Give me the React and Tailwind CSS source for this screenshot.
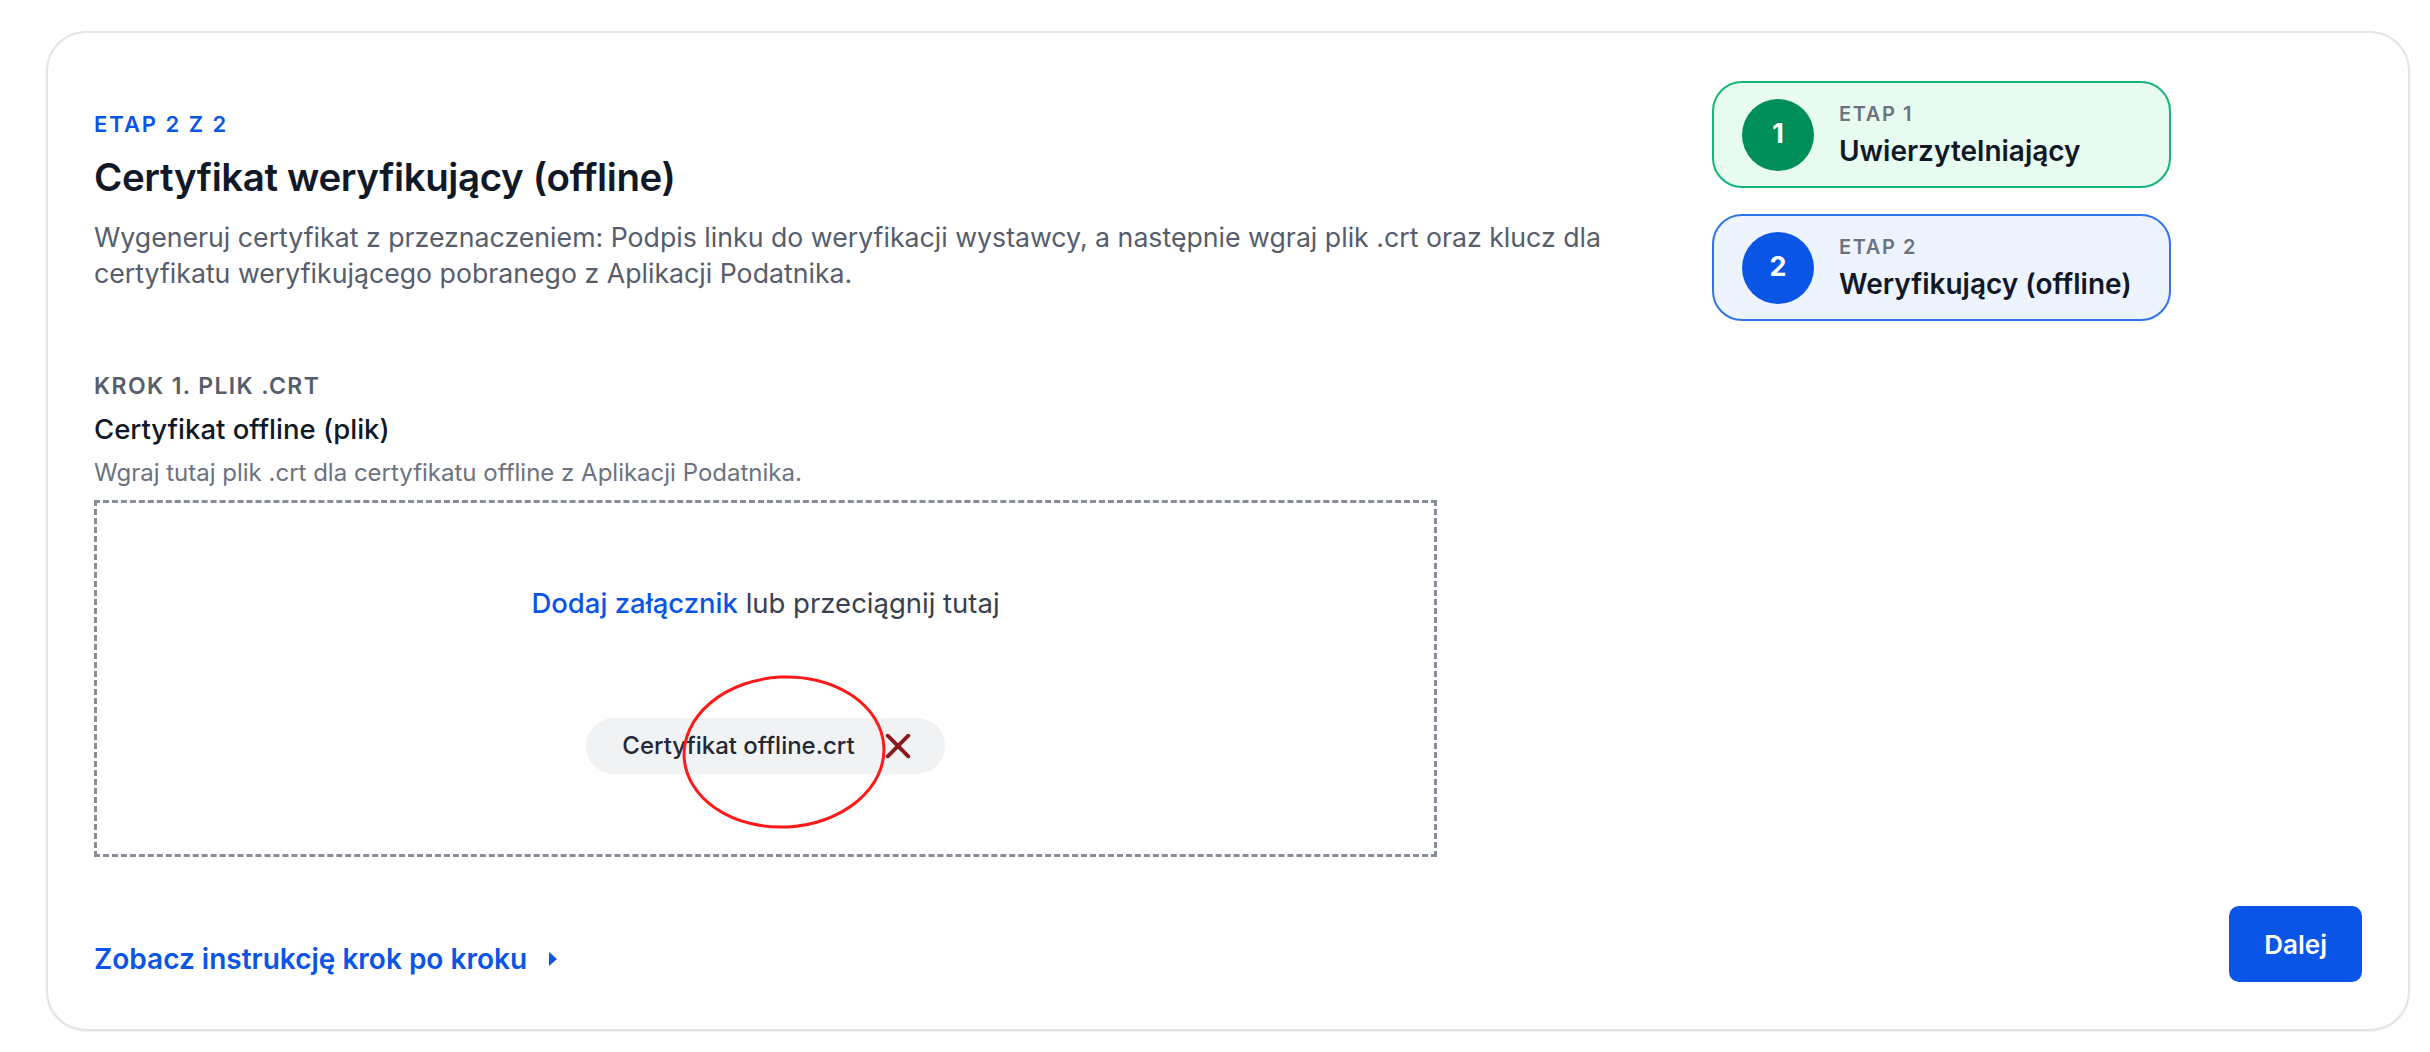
import React from 'react';

const StepCard = ({ number, label, title, active }) => (
  <div
    className={`flex items-center h-[107px] rounded-[30px] border-2 pl-[28px] ${
      active ? 'border-[#2f74e8] bg-[#eef4fd]' : 'border-[#12b57a] bg-[#e8fbf1]'
    }`}
  >
    <div
      className={`w-[72px] h-[72px] rounded-full flex items-center justify-center text-white text-[27px] font-bold ${
        active ? 'bg-[#0a55e6]' : 'bg-[#008f5b]'
      }`}
    >
      {number}
    </div>
    <div className="ml-[25px] flex flex-col">
      <span className="text-[20px] leading-[26px] font-semibold tracking-[0.08em] text-[#6b7280]">{label}</span>
      <span className="mt-[6px] text-[28px] leading-[36px] font-semibold text-[#111827]">{title}</span>
    </div>
  </div>
);

const App = () => {
  return (
    <div className="min-h-screen bg-white pl-[46px] pr-[20px] pt-[31px] pb-[21px] font-['Inter',sans-serif]">
      <div className="border-2 border-[#e3e3e8] rounded-[40px] shadow-[0_1px_2px_rgba(0,0,0,0.06)] pl-[46px] pr-[46px] pt-[48px] pb-[47px]">
        <div className="flex gap-[48px]">
          {/* Left column */}
          <div className="flex-1 pt-[29px]">
            <p className="text-[22px] leading-[28px] font-semibold tracking-[0.09em] text-[#0a55e6]">ETAP 2 Z 2</p>
            <h1 className="mt-[16px] text-[38.5px] leading-[46px] font-semibold tracking-[-0.01em] text-[#111827]">
              Certyfikat weryfikujący (offline)
            </h1>
            <p className="mt-[19px] text-[26.7px] leading-[36px] text-[#565d6b] max-w-[1570px]">
              Wygeneruj certyfikat z przeznaczeniem: Podpis linku do weryfikacji wystawcy, a następnie wgraj plik .crt oraz klucz dla certyfikatu weryfikującego pobranego z Aplikacji Podatnika.
            </p>

            {/* Step 1: crt file */}
            <p className="mt-[81px] text-[23px] leading-[28px] font-semibold tracking-[0.06em] text-[#565d6b]">KROK 1. PLIK .CRT</p>
            <p className="mt-[13px] text-[27.5px] leading-[32px] font-medium text-[#111827]">Certyfikat offline (plik)</p>
            <p className="mt-[14px] text-[24px] leading-[28px] text-[#6b7280]">
              Wgraj tutaj plik .crt dla certyfikatu offline z Aplikacji Podatnika.
            </p>

            <div className="relative mt-[13px] w-[1343px] h-[357px] border-[3px] border-dashed border-[#878d99] flex flex-col items-center pt-[82px]">
              <p className="text-[27.5px] leading-[36px] text-[#374151]">
                <span className="font-medium text-[#0a55e6]">Dodaj załącznik</span> lub przeciągnij tutaj
              </p>
              <div className="mt-[97px] h-[56px] rounded-full bg-[#f1f2f4] flex items-center pl-[36px] pr-[34px]">
                <span className="text-[24px] font-medium text-[#1f2937]">Certyfikat offline.crt</span>
                <svg className="ml-[30px]" width="26" height="26" viewBox="0 0 24 24" fill="none">
                  <path d="M2.5 2.5 L21.5 21.5 M21.5 2.5 L2.5 21.5" stroke="#8b1a1f" strokeWidth="3.6" strokeLinecap="round" />
                </svg>
              </div>
              {/* hand-drawn highlight */}
              <svg className="absolute left-[583px] top-[170px]" width="208" height="158" viewBox="0 0 208 158" fill="none">
                <ellipse cx="104" cy="79" rx="100" ry="75" stroke="#ff1a1a" strokeWidth="3" transform="rotate(-3 104 79)" />
              </svg>
            </div>
          </div>

          {/* Right column: stages */}
          <div className="w-[459px] mr-[191px] flex flex-col gap-[26px]">
            <StepCard number="1" label="ETAP 1" title="Uwierzytelniający" />
            <StepCard number="2" label="ETAP 2" title="Weryfikujący (offline)" active />
          </div>
        </div>

        {/* Footer */}
        <div className="mt-[49px] flex items-end justify-between">
          <a href="#" className="flex items-center pb-[5px] text-[28px] leading-[36px] font-semibold text-[#0a55e6]">
            Zobacz instrukcję krok po kroku
            <svg className="ml-[22px]" width="8" height="14" viewBox="0 0 8 14">
              <path d="M0 0 L8 7 L0 14 Z" fill="#0a55e6" />
            </svg>
          </a>
          <button className="h-[76px] px-[35px] rounded-[10px] bg-[#0a55e6] text-white text-[26px] font-semibold">
            Dalej
          </button>
        </div>
      </div>
    </div>
  );
};

export default App;
